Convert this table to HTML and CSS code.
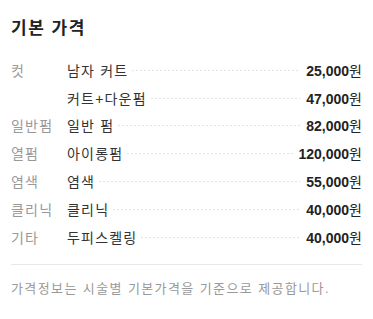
FILE: index.html
```html
<!DOCTYPE html>
<html lang="ko">
<head>
<meta charset="utf-8">
<link rel="stylesheet" href="styles.css">
</head>
<body>
<section class="price">
  <h2 class="title">기본 가격</h2>
  <ul class="list">
    <li class="row"><span class="cat">컷</span><span class="name">남자 커트</span><span class="dots"></span><span class="amt"><b>25,000</b>원</span></li>
    <li class="row"><span class="cat"></span><span class="name">커트+다운펌</span><span class="dots"></span><span class="amt"><b>47,000</b>원</span></li>
    <li class="row"><span class="cat">일반펌</span><span class="name">일반 펌</span><span class="dots"></span><span class="amt"><b>82,000</b>원</span></li>
    <li class="row"><span class="cat">열펌</span><span class="name">아이롱펌</span><span class="dots"></span><span class="amt"><b>120,000</b>원</span></li>
    <li class="row"><span class="cat">염색</span><span class="name">염색</span><span class="dots"></span><span class="amt"><b>55,000</b>원</span></li>
    <li class="row"><span class="cat">클리닉</span><span class="name">클리닉</span><span class="dots"></span><span class="amt"><b>40,000</b>원</span></li>
    <li class="row"><span class="cat">기타</span><span class="name">두피스켈링</span><span class="dots"></span><span class="amt"><b>40,000</b>원</span></li>
  </ul>
  <p class="note">가격정보는 시술별 기본가격을 기준으로 제공합니다.</p>
</section>
</body>
</html>
```
FILE: styles.css
```css
* { box-sizing: border-box; }
html, body { margin: 0; padding: 0; background: #fff; }
body {
  font-family: "Liberation Sans", "Noto Sans CJK KR", sans-serif;
  color: #333;
}
.price { padding: 17px 11px 0 11px; }
.title {
  margin: 0;
  font-size: 17px;
  line-height: 24px;
  font-weight: bold;
  letter-spacing: 1.5px;
  color: #222;
}
.list {
  list-style: none;
  margin: 15px 0 0 0;
  padding: 0;
}
.row {
  display: flex;
  align-items: center;
  height: 27.8px;
  font-size: 14px;
}
.cat {
  width: 56px;
  flex: none;
  color: #999;
  letter-spacing: 1.2px;
}
.name {
  flex: none;
  color: #333;
  letter-spacing: 1.2px;
}
.dots {
  flex: 1;
  height: 1px;
  margin: 1px 6px 0 4px;
  background-image: linear-gradient(to right, #e2e2e2 50%, transparent 50%);
  background-size: 4px 1px;
  background-repeat: repeat-x;
}
.amt {
  flex: none;
  color: #222;
}
.amt b { font-weight: bold; }
.note {
  margin: 13px 0 0 0;
  padding-top: 15px;
  border-top: 1px solid #e8e8e8;
  font-size: 13px;
  line-height: 18px;
  letter-spacing: 1.4px;
  color: #999;
}
```
